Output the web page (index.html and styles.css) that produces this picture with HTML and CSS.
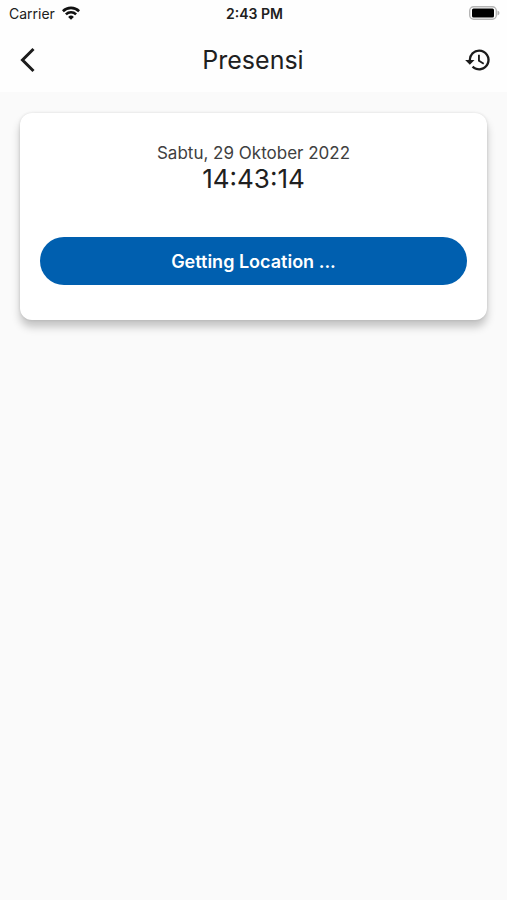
FILE: index.html
```html
<!DOCTYPE html>
<html lang="id">
<head>
  <meta charset="utf-8">
  <meta name="viewport" content="width=device-width, initial-scale=1">
  <title>Presensi</title>
  <link rel="stylesheet" href="styles.css">
</head>
<body>
  <header class="top">
    <div class="status">
      <div class="carrier">
        <span>Carrier</span>
        <svg class="wifi" viewBox="0 0 18 14" aria-hidden="true">
          <g fill="none" stroke="#111" stroke-width="2.6">
            <path d="M.9 5.2a11.6 11.6 0 0 1 16.2 0"/>
            <path d="M3.9 8.4a7.3 7.3 0 0 1 10.2 0"/>
          </g>
          <path d="M9 13.8 6.1 10.9a4.2 4.2 0 0 1 5.8 0z" fill="#111"/>
        </svg>
      </div>
      <span class="clock">2:43 PM</span>
      <svg class="battery" viewBox="0 0 31 14" aria-hidden="true">
        <rect x=".7" y=".7" width="26.6" height="12.6" rx="4" fill="#fff" stroke="#b5b5b5" stroke-width="1.4"/>
        <rect x="3" y="2.5" width="22" height="9" rx="1.5" fill="#000"/>
        <path d="M28.5 4.5q2 .8 2 2.5t-2 2.5z" fill="#b0b0b0"/>
      </svg>
    </div>
    <nav class="bar">
      <button class="icon-button" type="button" aria-label="Kembali">
        <svg class="icon" viewBox="0 0 28 28" aria-hidden="true">
          <path d="M19.5 3 8.500 14l11 11" fill="none" stroke="#1c1c1c" stroke-width="3"/>
        </svg>
      </button>
      <h1 class="title">Presensi</h1>
      <button class="icon-button" type="button" aria-label="Riwayat">
        <svg class="icon" viewBox="0 0 24 24" aria-hidden="true">
          <path fill="#1c1c1c" d="M13 3a9 9 0 0 0-9 9H1l4 4 4-4H6a7 7 0 1 1 2.060 4.940l-1.420 1.420A9 9 0 1 0 13 3zm-1 4.500v5.500l4.500 2.900.8-1.300-3.700-2.400V7.500z"/>
        </svg>
      </button>
    </nav>
  </header>
  <main class="content">
    <section class="card">
      <p class="date">Sabtu, 29 Oktober 2022</p>
      <p class="time">14:43:14</p>
      <button class="action" type="button">Getting Location ...</button>
    </section>
  </main>
</body>
</html>
```
FILE: styles.css
```css
* {
  box-sizing: border-box;
}

body {
  margin: 0;
  min-height: 100vh;
  background: #fafafa;
  color: #202020;
  font-family: Inter, "Liberation Sans", sans-serif;
}

.top {
  background: #fefefe;
}

.status {
  display: grid;
  grid-template-columns: 1fr auto 1fr;
  align-items: center;
  height: 26px;
  padding: 0 7px 0 9px;
  font-size: 14px;
}

.carrier {
  display: flex;
  align-items: center;
  gap: 7px;
}

.wifi {
  width: 18px;
  height: 14px;
}

.clock {
  font-weight: 600;
}

.battery {
  width: 31px;
  height: 14px;
  justify-self: end;
}

.bar {
  display: flex;
  align-items: center;
  justify-content: space-between;
  height: 66px;
  padding: 2px 15px 0 14px;
}

.icon-button {
  display: flex;
  padding: 0;
  border: 0;
  background: none;
}

.icon {
  width: 28px;
  height: 28px;
}

.title {
  margin: 0;
  font-size: 25px;
  font-weight: 400;
}

.content {
  padding: 21px 20px;
}

.card {
  padding: 28px 20px 35px;
  border-radius: 12px;
  background: #fff;
  box-shadow: 0 7px 8px rgba(0, 0, 0, 0.22), 0 0 3px rgba(0, 0, 0, 0.12);
  text-align: center;
}

.date,
.time {
  margin: 0;
}

.date {
  color: #404040;
  font-size: 17px;
  line-height: 24px;
}

.time {
  font-size: 26px;
  line-height: 28px;
}

.action {
  width: 100%;
  height: 48px;
  margin-top: 44px;
  border: 0;
  border-radius: 24px;
  background: #005faf;
  color: #fff;
  font: inherit;
  font-size: 18px;
  font-weight: 600;
}
```
